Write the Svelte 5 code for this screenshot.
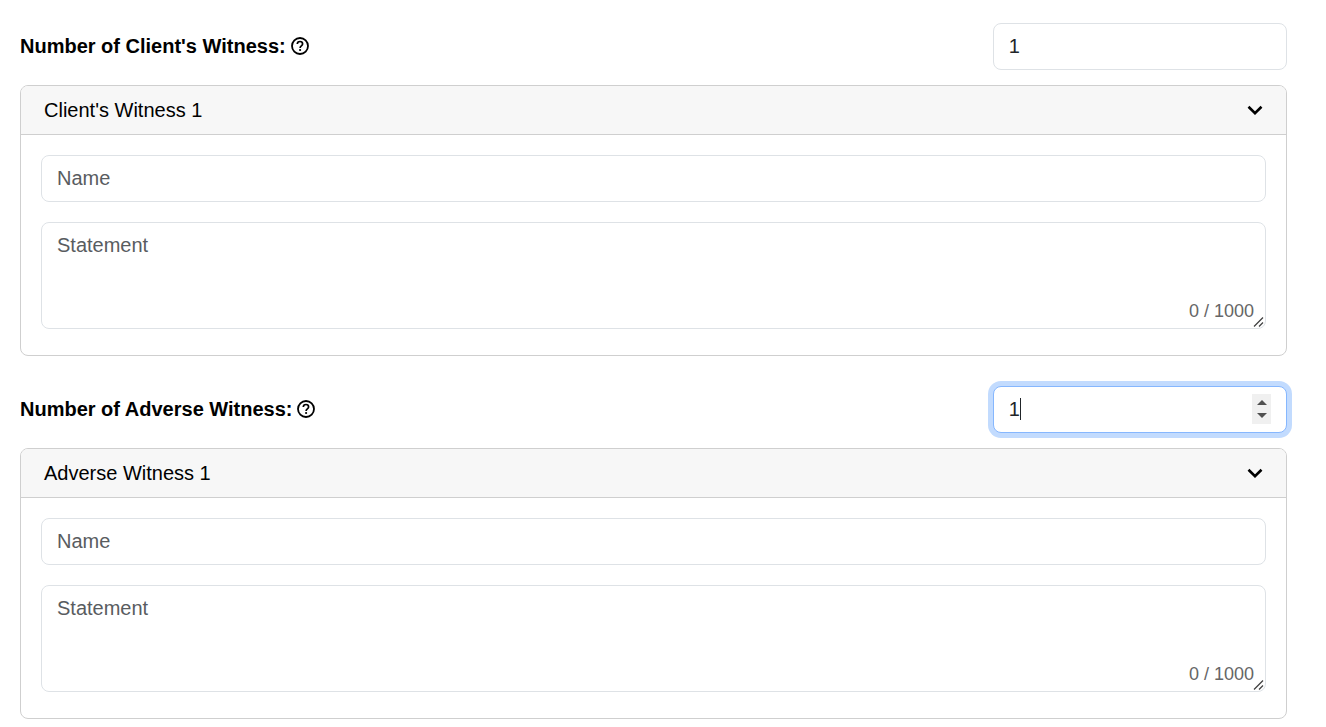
<script>
  import { onMount } from "svelte";

  const maxLength = 1000;

  let groups = $state([
    {
      id: "client",
      label: "Client's Witness",
      count: 1,
      witnesses: [{ name: "", statement: "", open: true }]
    },
    {
      id: "adverse",
      label: "Adverse Witness",
      count: 1,
      witnesses: [{ name: "", statement: "", open: true }]
    }
  ]);

  onMount(() => {
    document.getElementById("adverse-count").focus();
  });

  function resize(group) {
    const count = Math.max(0, Number(group.count) || 0);
    while (group.witnesses.length < count) {
      group.witnesses.push({ name: "", statement: "", open: true });
    }
    group.witnesses.length = count;
  }

  function step(group, amount) {
    group.count = Math.max(0, (Number(group.count) || 0) + amount);
    resize(group);
  }
</script>

<form>
  {#each groups as group (group.id)}
    <section>
      <div class="count-row">
        <div class="count-label">
          <label for="{group.id}-count">Number of {group.label}:</label>
          <button type="button" class="help" aria-label="Help">
            <svg viewBox="0 0 18 18" width="18" height="18" fill="none" stroke="currentColor">
              <circle cx="9" cy="9" r="8" stroke-width="1.8" />
              <path d="M6.3 7.1C6.3 5.5 7.5 4.500 9 4.500s2.600 1 2.600 2.400c0 1.900-2.500 2-2.500 4" stroke-width="1.7" />
              <circle cx="9.1" cy="13" r="1.1" fill="currentColor" stroke="none" />
            </svg>
          </button>
        </div>
        <div class="count">
          <input
            class="field"
            id="{group.id}-count"
            type="number"
            min="0"
            bind:value={group.count}
            oninput={() => resize(group)} />
          <span class="caret" style:left="{16 + 11 * String(group.count ?? '').length}px"></span>
          <div class="spinner">
            <button
              type="button"
              tabindex="-1"
              aria-label="Increase"
              onmousedown={e => e.preventDefault()}
              onclick={() => step(group, 1)}>
              <svg viewBox="0 0 10 5" width="10" height="5"><path d="M0 5L5 0l5 5z" /></svg>
            </button>
            <button
              type="button"
              tabindex="-1"
              aria-label="Decrease"
              onmousedown={e => e.preventDefault()}
              onclick={() => step(group, -1)}>
              <svg viewBox="0 0 10 5" width="10" height="5"><path d="M0 0l5 5 5-5z" /></svg>
            </button>
          </div>
        </div>
      </div>

      {#each group.witnesses as witness, i}
        <div class="card">
          <button
            type="button"
            class="card-header"
            aria-expanded={witness.open}
            onclick={() => (witness.open = !witness.open)}>
            <span>{group.label} {i + 1}</span>
            <svg
              class:closed={!witness.open}
              viewBox="0 0 16 10"
              width="16"
              height="10"
              fill="none"
              stroke="currentColor"
              stroke-width="2.6">
              <path d="M1.500 1.800L8 8.200l6.500-6.400" />
            </svg>
          </button>
          {#if witness.open}
            <div class="card-body">
              <input
                class="field"
                type="text"
                placeholder="Name"
                aria-label="Name"
                bind:value={witness.name} />
              <div class="statement">
                <textarea
                  class="field"
                  placeholder="Statement"
                  aria-label="Statement"
                  maxlength={maxLength}
                  bind:value={witness.statement}></textarea>
                <span class="counter">{witness.statement.length} / {maxLength}</span>
                <svg class="grip" viewBox="0 0 12 12" width="12" height="12">
                  <path d="M1 10.500L10 1.500M6 10.500L10 6.500" />
                </svg>
              </div>
            </div>
          {/if}
        </div>
      {/each}
    </section>
  {/each}
</form>

<style>
  :global(body) {
    background: white;
    color: black;
    font-family: "Liberation Sans", Arial, sans-serif;
    font-size: 20px;
    line-height: 30px;
  }

  form {
    display: flex;
    flex-direction: column;
    gap: 30px;
    padding: 23px 39px 8px 20px;
  }

  section {
    display: flex;
    flex-direction: column;
    gap: 15px;
  }

  .count-row {
    display: grid;
    grid-template-columns: repeat(12, 1fr);
    gap: 30px;
    align-items: center;
  }

  .count-label {
    grid-column: span 9;
    display: flex;
    align-items: center;
    gap: 5px;
    padding-bottom: 2px;
    font-weight: bold;
  }

  .count {
    grid-column: span 3;
    position: relative;
  }

  .help {
    display: flex;
    padding: 0;
    border: none;
    background: none;
    color: inherit;
    cursor: help;
  }

  .field {
    display: block;
    box-sizing: border-box;
    width: 100%;
    height: 47px;
    padding: 7px 15px;
    border: 1px solid #dee2e6;
    border-radius: 8px;
    background: white;
    color: #212529;
    font: inherit;
    outline: none;
  }

  .field::placeholder {
    color: #595c5f;
    opacity: 1;
  }

  .field:focus {
    border-color: #86b7fe;
    box-shadow: 0 0 0 5px #c2dbfe;
  }

  .count .field {
    appearance: textfield;
    caret-color: transparent;
  }

  .caret {
    display: none;
    position: absolute;
    top: 12px;
    width: 1px;
    height: 22px;
    background: #212529;
    pointer-events: none;
  }

  .spinner {
    display: none;
    position: absolute;
    top: 8px;
    right: 16px;
    width: 19px;
    height: 30px;
    flex-direction: column;
    background: #f0f0f0;
  }

  .count:focus-within .caret {
    display: block;
  }

  .count:focus-within .spinner {
    display: flex;
  }

  .spinner button {
    display: flex;
    flex: 1;
    align-items: flex-end;
    justify-content: center;
    padding: 0 0 4px;
    border: none;
    background: none;
  }

  .spinner button:last-child {
    align-items: flex-start;
    padding: 4px 0 0;
  }

  .spinner path {
    fill: #505050;
  }

  .card {
    border: 1px solid #cfcfcf;
    border-radius: 8px;
    overflow: hidden;
  }

  .card-header {
    display: flex;
    justify-content: space-between;
    align-items: center;
    width: 100%;
    padding: 9px 23px;
    border: none;
    background: #f7f7f7;
    color: inherit;
    font: inherit;
    text-align: left;
    cursor: pointer;
  }

  .closed {
    transform: rotate(-90deg);
  }

  .card-body {
    display: flex;
    flex-direction: column;
    gap: 20px;
    padding: 20px 20px 26px;
    border-top: 1px solid #cfcfcf;
  }

  .statement {
    position: relative;
  }

  textarea.field {
    height: 107px;
    resize: vertical;
  }

  textarea::-webkit-resizer {
    background: transparent;
  }

  .counter {
    position: absolute;
    right: 12px;
    bottom: 3px;
    color: #666;
    font-size: 18px;
    pointer-events: none;
  }

  .grip {
    position: absolute;
    right: 1px;
    bottom: 1px;
    fill: none;
    stroke: #444;
    stroke-width: 1.3;
    pointer-events: none;
  }
</style>
